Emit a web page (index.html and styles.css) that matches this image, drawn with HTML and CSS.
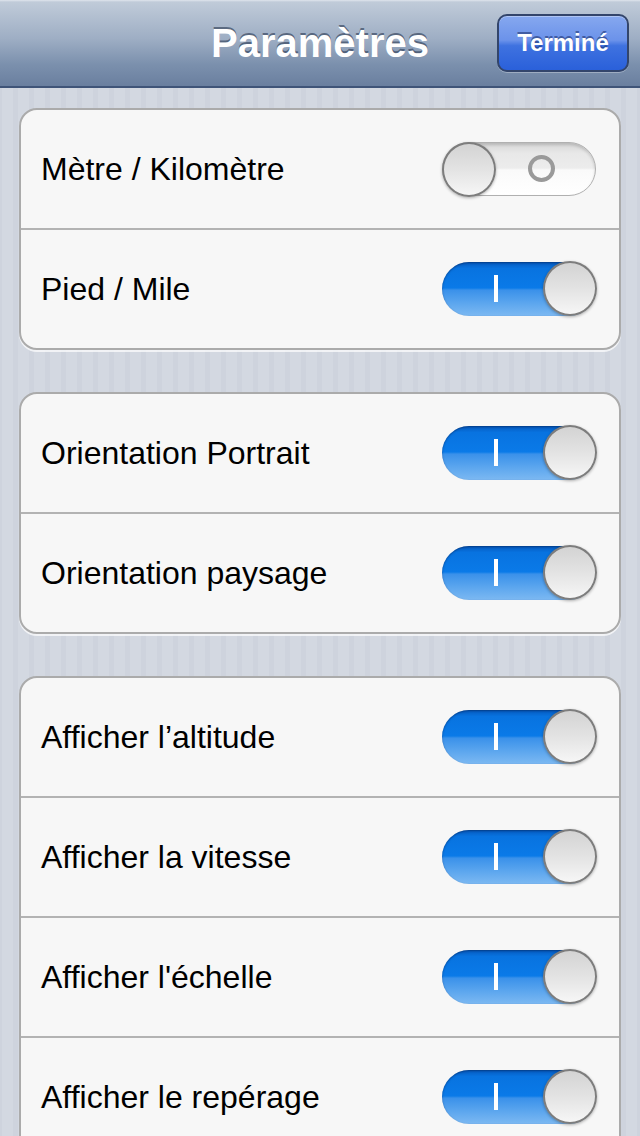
FILE: index.html
```html
<!DOCTYPE html>
<html>
<head>
    <title>Paramètres</title>
    <link rel="stylesheet" href="styles.css">
</head>
<body>
    <header class="navbar">
        <h1 class="nav-title">Paramètres</h1>
        <button class="done-btn">Terminé</button>
    </header>

    <main class="content">
        <section class="group">
            <div class="row">
                <span class="label">Mètre / Kilomètre</span>
                <span class="switch off"><span class="mark"></span><span class="knob"></span></span>
            </div>
            <div class="row">
                <span class="label">Pied / Mile</span>
                <span class="switch on"><span class="mark"></span><span class="knob"></span></span>
            </div>
        </section>

        <section class="group">
            <div class="row">
                <span class="label">Orientation Portrait</span>
                <span class="switch on"><span class="mark"></span><span class="knob"></span></span>
            </div>
            <div class="row">
                <span class="label">Orientation paysage</span>
                <span class="switch on"><span class="mark"></span><span class="knob"></span></span>
            </div>
        </section>

        <section class="group">
            <div class="row">
                <span class="label">Afficher l’altitude</span>
                <span class="switch on"><span class="mark"></span><span class="knob"></span></span>
            </div>
            <div class="row">
                <span class="label">Afficher la vitesse</span>
                <span class="switch on"><span class="mark"></span><span class="knob"></span></span>
            </div>
            <div class="row">
                <span class="label">Afficher l'échelle</span>
                <span class="switch on"><span class="mark"></span><span class="knob"></span></span>
            </div>
            <div class="row">
                <span class="label">Afficher le repérage</span>
                <span class="switch on"><span class="mark"></span><span class="knob"></span></span>
            </div>
        </section>
    </main>
</body>
</html>
```

FILE: styles.css
```css
* {
    margin: 0;
    padding: 0;
    box-sizing: border-box;
    font-family: 'Liberation Sans', Arial, sans-serif;
}

html, body {
    height: 100%;
    overflow: hidden;
}

body {
    background-color: #d3d8e1;
    background-image: linear-gradient(to right,
        #d3d8e1 0px, #d3d8e1 11px,
        #ced3dd 11px, #ced3dd 16px);
    background-size: 16px 100%;
    background-position: 2px 0;
}

/* top bar */
.navbar {
    height: 88px;
    display: grid;
    grid-template-columns: 1fr auto 1fr;
    align-items: start;
    background: linear-gradient(to bottom, #dfe5ed 0px, #c0cbd9 2px, #9eaec4 45%, #7b90ad 75%, #6a7f9f 100%);
    border-bottom: 2px solid #3f5478;
}

.nav-title {
    grid-column: 2;
    margin-top: 20px;
    font-size: 40px;
    font-weight: bold;
    line-height: 46px;
    color: #fff;
    text-shadow: 0 -2px 0 rgba(40, 55, 80, 0.6);
}

.done-btn {
    grid-column: 3;
    justify-self: end;
    margin-top: 14px;
    margin-right: 11px;
    width: 132px;
    height: 58px;
    border: 2px solid #33456b;
    border-radius: 10px;
    background: linear-gradient(to bottom, #86a8ef 0%, #6b92ea 45%, #3f72e0 55%, #2a60da 100%);
    box-shadow: inset 0 1px 0 rgba(255, 255, 255, 0.35), 0 1px 0 rgba(255, 255, 255, 0.3);
    color: #fff;
    font-size: 24px;
    font-weight: bold;
    text-shadow: 0 -2px 0 rgba(20, 40, 100, 0.55);
}

/* grouped table */
.content {
    padding: 20px 19px 0 19px;
    display: flex;
    flex-direction: column;
    gap: 42px;
}

.group {
    background: #f7f7f7;
    border: 2px solid #ababab;
    border-radius: 18px;
    box-shadow: 0 2px 0 rgba(255, 255, 255, 0.7);
    overflow: hidden;
}

.row {
    height: 118px;
    display: flex;
    align-items: center;
    justify-content: space-between;
    padding: 0 23px 0 20px;
}

.row + .row {
    height: 120px;
    border-top: 2px solid #b3b3b3;
}

.label {
    font-size: 32px;
    color: #000;
}

/* switches */
.switch {
    position: relative;
    width: 154px;
    height: 54px;
    border-radius: 27px;
    flex-shrink: 0;
}

.switch.on {
    background: linear-gradient(to bottom, #0559bd 0%, #0873e0 12%, #0a7ae8 48%, #3a91ea 52%, #5aa5ee 75%, #7cb9f2 100%);
    box-shadow: inset 0 1px 2px rgba(0, 30, 80, 0.5);
}

.switch.off {
    background: linear-gradient(to bottom, #d6d6d6 0%, #e8e8e8 20%, #ececec 48%, #fafafa 52%, #ffffff 100%);
    border: 1px solid #b0b0b0;
    box-shadow: inset 0 2px 3px rgba(0, 0, 0, 0.15);
}

.switch .knob {
    position: absolute;
    top: -1px;
    width: 54px;
    height: 55px;
    border-radius: 50%;
    border: 2px solid #7d7d7d;
    background: linear-gradient(to bottom, #d3d3d3 0%, #e3e3e3 50%, #f6f6f6 100%);
    box-shadow: 0 1px 3px rgba(0, 0, 0, 0.3);
}

.switch.on .knob {
    right: -1px;
}

.switch.off .knob {
    left: -1px;
}

.switch.on .mark {
    position: absolute;
    left: 52px;
    top: 13px;
    width: 4px;
    height: 27px;
    background: #fff;
}

.switch.off .mark {
    position: absolute;
    left: 85px;
    top: 12px;
    width: 27px;
    height: 27px;
    border-radius: 50%;
    border: 4px solid #9a9a9a;
}
```
